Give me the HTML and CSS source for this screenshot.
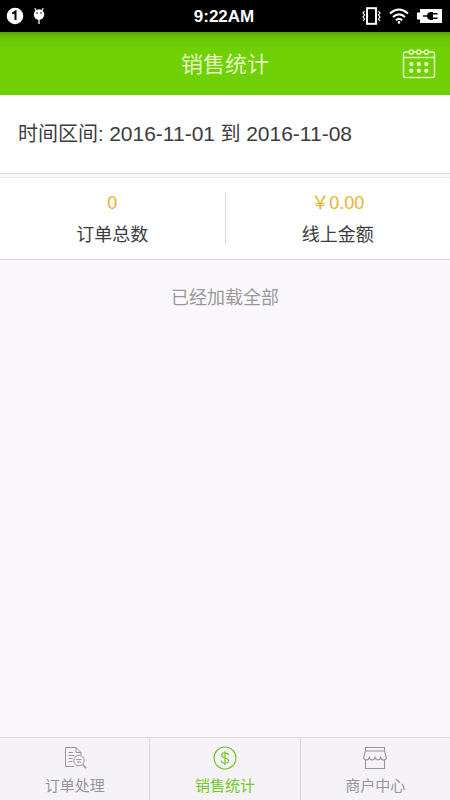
FILE: index.html
```
<!DOCTYPE html>
<html lang="zh-CN">
<head>
<meta charset="utf-8">
<meta name="viewport" content="width=device-width, initial-scale=1">
<title>销售统计</title>
<link rel="stylesheet" href="styles.css">
</head>
<body>
<div class="status">
  <div class="status-side">
    <svg width="18" height="18" viewBox="0 0 18 18"><circle cx="9" cy="9" r="8.3" fill="#fff"/><path d="M6.3 6.6 9.5 4.6V13" fill="none" stroke="#000" stroke-width="2"/></svg>
    <svg width="12" height="18" viewBox="0 0 12 18"><path d="M1.8 1.2 3.4 4M10.2 1.2 8.6 4" stroke="#fff" stroke-width="1.3"/><circle cx="6" cy="7.5" r="5.2" fill="#fff"/><path d="M6 12v5" stroke="#fff" stroke-width="1.3"/><circle cx="4" cy="6" r=".8"/><circle cx="8" cy="6" r=".8"/></svg>
  </div>
  <time class="clock">9:22AM</time>
  <div class="status-side status-end">
    <svg width="20" height="18" viewBox="0 0 20 18" fill="none" stroke="#fff"><rect x="6" y="1.2" width="9" height="15.6" stroke-width="2"/><path d="M3.6 4 2 6l1.6 2L2 10l1.6 2L2 14M17.4 4 19 6l-1.600 2 1.600 2-1.600 2 1.600 2" stroke-width="1.2"/></svg>
    <svg width="20" height="16" viewBox="0 0 20 16" fill="none" stroke="#fff" stroke-width="2"><path d="M1 5.400q9-7.800 18 0M4 9q6-5.200 12 0M6.800 12.200q3.200-2.600 6.400 0"/><circle cx="10" cy="14.400" r="1.300" fill="#fff" stroke="none"/></svg>
    <svg width="25" height="14" viewBox="0 0 25 14"><path d="M3 0h22v14H3v-3.500H0v-7h3z" fill="#fff"/><path d="M6 7h5" stroke="#000" stroke-width="1.500"/><path d="M16 3v8h-2.500Q10 10.500 10 7t3.500-4z"/><path d="M16 4.700h4.500M16 9.300h4.500" stroke="#000" stroke-width="1.600"/></svg>
  </div>
</div>
<header class="header">
  <h1 class="title">销售统计</h1>
  <button class="calendar" type="button" aria-label="选择日期">
    <svg width="34" height="32" viewBox="0 0 34 32" fill="none" stroke="#e2f7c0" stroke-width="1.500"><path d="M7 4H3.500Q1.500 4 1.500 6v21.500q0 2 2 2h27q2 0 2-2V6q0-2-2-2H27M11.500 4h3M19 4h3M1.500 9.500h31"/><circle cx="9.300" cy="4" r="2.100"/><circle cx="16.800" cy="4" r="2.100"/><circle cx="24.300" cy="4" r="2.100"/><g fill="#e2f7c0" stroke="none"><circle cx="9.300" cy="16" r="2.200"/><circle cx="16.800" cy="16" r="2.200"/><circle cx="24.300" cy="16" r="2.200"/><circle cx="9.300" cy="22.700" r="2.200"/><circle cx="16.800" cy="22.700" r="2.200"/><circle cx="24.300" cy="22.700" r="2.200"/></g></svg>
  </button>
</header>
<main class="content">
  <p class="range">时间区间: <time>2016-11-01</time> 到 <time>2016-11-08</time></p>
  <dl class="stats">
    <div class="stat"><dt>订单总数</dt><dd>0</dd></div>
    <div class="stat"><dt>线上金额</dt><dd>￥0.00</dd></div>
  </dl>
  <p class="end">已经加载全部</p>
</main>
<nav class="tabs">
  <a class="tab" href="#orders">
    <svg width="24" height="24" viewBox="0 0 24 24" fill="none" stroke="currentColor"><path d="M11 20.500H2.500v-19H13l5 5V9M13 1.500v5h5M5.500 6.500H10M5.500 9.500h6M5.500 12.500h4M5.500 15.500h4"/><circle cx="16" cy="14.500" r="5.200"/><path d="M13.500 13.500h5M14 16h4"/><path d="m19.800 18.500 3.200 3.700" stroke-width="1.500"/></svg>
    <span>订单处理</span>
  </a>
  <a class="tab active" href="#stats" aria-current="page">
    <svg width="24" height="24" viewBox="0 0 24 24" fill="none" stroke="currentColor" stroke-width="1.200"><circle cx="12" cy="12" r="11"/><path d="M12 5v14M15.500 9.300Q15.300 6.800 12 6.800T8.600 9.300q0 2 3.400 2.700t3.600 2.700Q15.600 17.200 12 17.200t-3.700-2.700"/></svg>
    <span>销售统计</span>
  </a>
  <a class="tab" href="#shop">
    <svg width="24" height="24" viewBox="0 0 24 24" fill="none" stroke="currentColor" stroke-width="1.100"><path d="M2.500 5V1.500h19V5M2.500 5h19l2 7q-.8 2-3 2t-2.800-2.500Q17 14 14.900 14T12 11.500Q11.200 14 9.100 14t-2.800-2.500Q5.600 14 3.500 14t-3-2zM2.500 14v8.500h19V14"/></svg>
    <span>商户中心</span>
  </a>
</nav>
</body>
</html>
```
FILE: styles.css
```
* {
  box-sizing: border-box;
}

body {
  margin: 0;
  min-height: 100vh;
  display: flex;
  flex-direction: column;
  background: #faf8fc;
  color: #3c3b40;
  font-family: "Liberation Sans", "Noto Sans CJK SC", sans-serif;
}

svg {
  display: block;
}

.status {
  height: 32px;
  padding: 0 8px 0 6px;
  display: grid;
  grid-template-columns: 1fr auto 1fr;
  align-items: center;
  background: #000;
  color: #fff;
}

.status-side {
  display: flex;
  align-items: center;
  gap: 9px;
}

.status-end {
  justify-content: flex-end;
  gap: 8px;
}

.clock {
  padding-top: 2px;
  font-size: 17px;
  font-weight: bold;
}

.header {
  height: 63px;
  padding: 0 14px;
  display: grid;
  grid-template-columns: 1fr auto 1fr;
  align-items: center;
  background: linear-gradient(#579f08, #66c005 4px, #6ccb05 10px, #6fd003 18px);
}

.title {
  grid-column: 2;
  margin: 0;
  padding-bottom: 4px;
  color: #e2f7c0;
  font-size: 22px;
  font-weight: 400;
}

.calendar {
  justify-self: end;
  padding: 0;
  border: 0;
  background: none;
}

.content {
  flex: 1;
}

.range {
  margin: 0;
  padding: 0 18px;
  border-bottom: 1px solid #dbd9de;
  background: #fff;
  font-size: 20px;
  line-height: 77px;
}

.range time {
  font-size: 21px;
}

.stats {
  margin: 3px 0 0;
  padding: 14px 0 15px;
  display: flex;
  border-top: 1px solid #e8e6ea;
  border-bottom: 1px solid #dbd9de;
  background: #fff;
}

.stat {
  flex: 1;
  display: flex;
  flex-direction: column-reverse;
  gap: 12px;
  text-align: center;
  font-size: 18px;
  line-height: 18px;
}

.stat + .stat {
  border-left: 1px solid #dbd9de;
}

.stat dd {
  margin: 0;
  line-height: 22px;
  color: #e6b32e;
}

.end {
  margin: 24px 0;
  color: #999;
  text-align: center;
  font-size: 18px;
  line-height: 28px;
}

.tabs {
  display: flex;
  border-top: 1px solid #d8d6db;
  background: #f5f3f7;
}

.tab {
  flex: 1;
  padding: 8px 0 3px;
  display: flex;
  flex-direction: column;
  align-items: center;
  gap: 5px;
  color: #97959a;
  text-decoration: none;
  font-size: 15px;
  line-height: 22px;
}

.tab + .tab {
  border-left: 1px solid #d8d6db;
}

.tab.active {
  color: #72c829;
}
```
